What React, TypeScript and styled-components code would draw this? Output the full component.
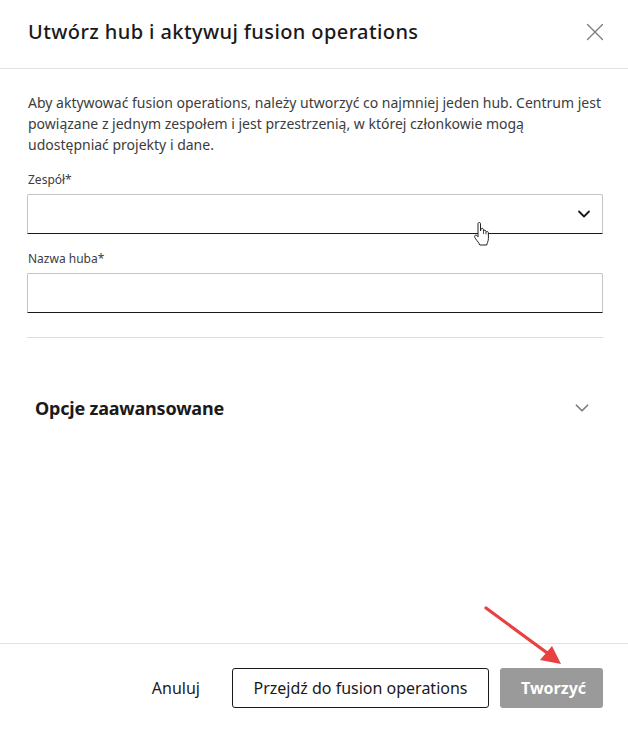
import React from "react";
import styled, { createGlobalStyle } from "styled-components";

const Global = createGlobalStyle`
  html, body { margin: 0; padding: 0; background: #fff; }
  body { font-family: "Noto Sans", "Open Sans", "Liberation Sans", sans-serif; color: #3c3c3c; }
  * { box-sizing: border-box; }
`;

const Dialog = styled.div`
  position: relative;
  width: 628px;
  height: 729px;
  display: flex;
  flex-direction: column;
  background: #fff;
`;

const Header = styled.div`
  height: 69px;
  display: flex;
  align-items: center;
  justify-content: space-between;
  padding: 0 24px 5px 28px;
  border-bottom: 1px solid #e2e2e2;
`;

const Title = styled.h1`
  margin: 0;
  font-size: 20px;
  font-weight: 500;
  color: #1a1a1a;
  letter-spacing: 0.4px;
`;

const CloseButton = styled.button`
  border: 0;
  background: none;
  padding: 0;
  width: 18px;
  height: 18px;
  display: flex;
  align-items: center;
  justify-content: center;
  cursor: pointer;
`;

const Body = styled.div`
  flex: 1;
  padding: 23px 25px 0 27px;
  display: flex;
  flex-direction: column;
`;

const Intro = styled.p`
  margin: 0 -20px 0 1px;
  font-size: 14px;
  line-height: 21px;
  color: #3c3c3c;
`;

const Field = styled.div<{ $top: number }>`
  margin-top: ${(p) => p.$top}px;
  display: flex;
  flex-direction: column;
`;

const Label = styled.label`
  font-size: 12px;
  line-height: 16px;
  color: #3c3c3c;
  margin: 0 0 6px 1px;
`;

const Box = styled.div`
  position: relative;
  height: 40px;
  border: 1px solid #c4c4c4;
  border-bottom: 1px solid #1a1a1a;
  border-radius: 2px 2px 0 0;
  display: flex;
  align-items: center;
  justify-content: flex-end;
  padding-right: 10px;
  background: #fff;
`;

const Divider = styled.hr`
  margin: 24px 0 0;
  border: 0;
  border-top: 1px solid #dcdcdc;
`;

const AccordionRow = styled.div`
  margin-top: 50px;
  display: flex;
  align-items: center;
  justify-content: space-between;
  padding: 0 12px 0 8px;
  height: 40px;
`;

const AccordionTitle = styled.span`
  font-size: 18px;
  font-weight: 700;
  letter-spacing: -0.2px;
  color: #1a1a1a;
`;

const Footer = styled.div`
  height: 86px;
  border-top: 1px solid #e2e2e2;
  display: flex;
  align-items: flex-start;
  justify-content: flex-end;
  padding: 24px 25px 0 0;
  gap: 11px;
`;

const Button = styled.button<{ $variant: "flat" | "outline" | "primary" }>`
  height: 40px;
  font-family: inherit;
  font-size: 16px;
  font-weight: ${(p) => (p.$variant === "primary" ? 700 : 400)};
  border-radius: 3px;
  cursor: pointer;
  padding: 0 20px;
  color: ${(p) => (p.$variant === "primary" ? "#fff" : "#1a1a1a")};
  background: ${(p) => (p.$variant === "primary" ? "#9a9a9a" : "#fff")};
  border: 1px solid
    ${(p) => (p.$variant === "outline" ? "#1a1a1a" : "transparent")};
  ${(p) => (p.$variant === "outline" ? "width: 257px;" : "")}
  ${(p) => (p.$variant === "primary" ? "width: 103px;" : "")}
`;

const Overlay = styled.svg`
  position: absolute;
  pointer-events: none;
`;

const Chevron = ({ color, size, w }: { color: string; size: number; w: number }) => (
  <svg width={size} height={size} viewBox="0 0 16 16">
    <path d="M3 5.5 L8 10.5 L13 5.5" fill="none" stroke={color} strokeWidth={w} strokeLinecap="round" strokeLinejoin="round" />
  </svg>
);

export default function App() {
  return (
    <>
      <Global />
      <Dialog>
        <Header>
          <Title>Utwórz hub i aktywuj fusion operations</Title>
          <CloseButton aria-label="Zamknij">
            <svg width="18" height="18" viewBox="0 0 18 18">
              <path d="M1.5 1.5 L16.5 16.5 M16.5 1.5 L1.5 16.5" stroke="#7a7a7a" strokeWidth="1.3" strokeLinecap="round" />
            </svg>
          </CloseButton>
        </Header>
        <Body>
          <Intro>
            Aby aktywować fusion operations, należy utworzyć co najmniej jeden hub. Centrum jest
            <br />
            powiązane z jednym zespołem i jest przestrzenią, w której członkowie mogą
            <br />
            udostępniać projekty i dane.
          </Intro>
          <Field $top={17}>
            <Label>Zespół*</Label>
            <Box>
              <Chevron color="#1a1a1a" size={16} w={1.8} />
            </Box>
          </Field>
          <Field $top={17}>
            <Label>Nazwa huba*</Label>
            <Box />
          </Field>
          <Divider />
          <AccordionRow>
            <AccordionTitle>Opcje zaawansowane</AccordionTitle>
            <Chevron color="#777" size={18} w={1.4} />
          </AccordionRow>
        </Body>
        <Footer>
          <Button $variant="flat">Anuluj</Button>
          <Button $variant="outline">Przejdź do fusion operations</Button>
          <Button $variant="primary">Tworzyć</Button>
        </Footer>

        <Overlay style={{ left: 471, top: 220 }} width="24" height="28" viewBox="0 0 24 28">
          <path
            d="M7 3.5 C7 2.2 9.5 2.2 9.5 3.5 L9.5 11 L10 9.2 C10.3 8 12.3 8 12.4 9.4 L12.5 11 C12.8 9.8 14.8 9.8 14.9 11.2 L15 12.3 C15.4 11.2 17.4 11.3 17.4 12.7 L17.4 18.5 C17.4 21.5 15.8 23.5 15.8 25 L8.8 25 C8.5 23.2 6 21 4.6 18.8 C3.4 17 3.2 15.6 4.5 15.2 C5.6 14.9 6.3 15.9 7 16.8 Z"
            fill="#fff"
            stroke="#222"
            strokeWidth="1"
            strokeLinejoin="round"
          />
          <path d="M12.5 11 L12.5 14 M15 12.3 L15 14.5" stroke="#222" strokeWidth="0.8" />
        </Overlay>

        <Overlay style={{ left: 478, top: 600 }} width="90" height="70" viewBox="0 0 90 70">
          <line x1="8" y1="8" x2="72" y2="55" stroke="#e8413f" strokeWidth="3.2" strokeLinecap="round" />
          <polygon points="83,64 62,60 74,46" fill="#e8413f" />
        </Overlay>
      </Dialog>
    </>
  );
}
